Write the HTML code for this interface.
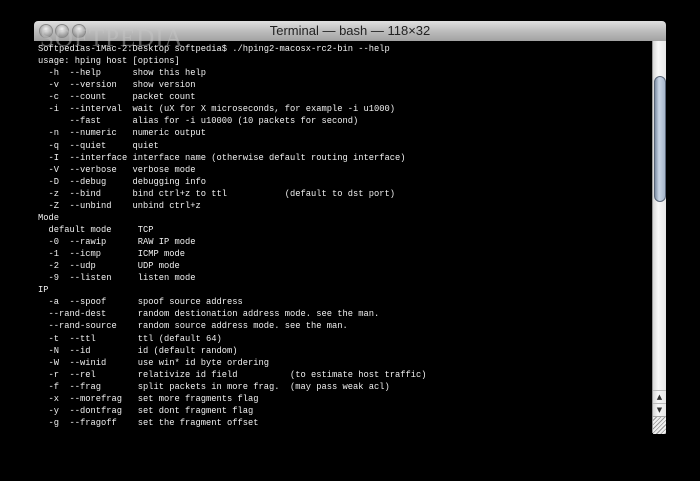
<!DOCTYPE html>
<html><head><meta charset="utf-8"><style>
html,body{margin:0;padding:0;background:#000;width:700px;height:481px;overflow:hidden}
#win{position:absolute;left:34px;top:21px;width:632px;height:412px;background:#000}
#title{position:absolute;left:0;top:0;width:632px;height:20px;background:linear-gradient(#e0e0e0,#bdbdbd 50%,#a2a2a2);border-radius:4px 4px 0 0;font:13px "Liberation Sans",sans-serif;color:#222;text-align:center;line-height:20px}
.tl{position:absolute;top:4px;width:12px;height:12px;border-radius:50%;background:radial-gradient(circle at 50% 35%,#f4f4f4,#9a9a9a 70%,#777);box-shadow:0 0 0 1px #888}
#sb{position:absolute;left:618px;top:20px;width:13px;height:392px;background:linear-gradient(90deg,#d8d8d8,#f8f8f8 40%,#e6e6e6);border-left:1px solid #999}
#thumb{position:absolute;left:1px;top:35px;width:10px;height:124px;border-radius:6px;background:linear-gradient(90deg,#7e8ea4,#c9d6e6 40%,#a7b6ca);border:1px solid #5a6678}
.ar{position:absolute;left:0;width:13px;height:13px;font:7px "DejaVu Sans",sans-serif;color:#333;text-align:center;line-height:13px;border-top:1px solid #bbb}
#rz{position:absolute;left:0;top:375px;width:13px;height:17px;border-top:1px solid #aaa;background:repeating-linear-gradient(135deg,#eee 0 2px,#999 2px 3px)}
pre{position:absolute;left:4px;top:22px;margin:0;font:8.75px/12.07px "Liberation Mono",monospace;color:#f0f0f0}
#wm{position:absolute;left:40px;top:25px;font:25px "Liberation Serif",serif;color:rgba(200,200,200,.45);letter-spacing:1px}
</style></head><body>
<div id="win">
<div id="title">Terminal — bash — 118×32
<div class="tl" style="left:6px"></div><div class="tl" style="left:22px"></div><div class="tl" style="left:39px"></div></div>
<pre>Softpedias-iMac-2:Desktop softpedia$ ./hping2-macosx-rc2-bin --help
usage: hping host [options]
  -h  --help      show this help
  -v  --version   show version
  -c  --count     packet count
  -i  --interval  wait (uX for X microseconds, for example -i u1000)
      --fast      alias for -i u10000 (10 packets for second)
  -n  --numeric   numeric output
  -q  --quiet     quiet
  -I  --interface interface name (otherwise default routing interface)
  -V  --verbose   verbose mode
  -D  --debug     debugging info
  -z  --bind      bind ctrl+z to ttl           (default to dst port)
  -Z  --unbind    unbind ctrl+z
Mode
  default mode     TCP
  -0  --rawip      RAW IP mode
  -1  --icmp       ICMP mode
  -2  --udp        UDP mode
  -9  --listen     listen mode
IP
  -a  --spoof      spoof source address
  --rand-dest      random destionation address mode. see the man.
  --rand-source    random source address mode. see the man.
  -t  --ttl        ttl (default 64)
  -N  --id         id (default random)
  -W  --winid      use win* id byte ordering
  -r  --rel        relativize id field          (to estimate host traffic)
  -f  --frag       split packets in more frag.  (may pass weak acl)
  -x  --morefrag   set more fragments flag
  -y  --dontfrag   set dont fragment flag
  -g  --fragoff    set the fragment offset</pre>
<div id="sb"><div id="thumb"></div>
<div class="ar" style="top:349px">▲</div><div class="ar" style="top:362px">▼</div><div id="rz"></div></div>
</div>
<div id="wm">SOFTPEDIA</div>
</body></html>
